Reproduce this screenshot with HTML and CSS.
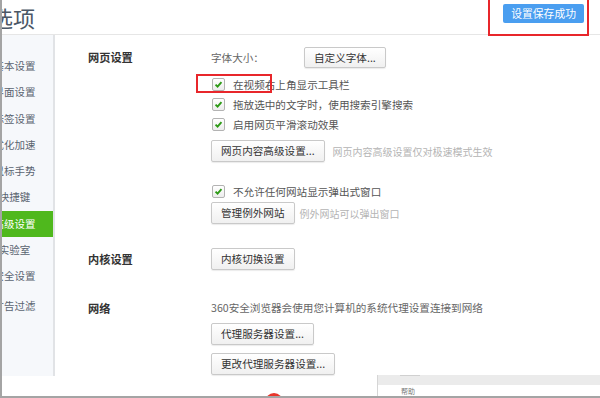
FILE: index.html
```html
<!DOCTYPE html>
<html lang="zh-CN">
<head>
    <meta charset="UTF-8">
    <meta name="viewport" content="width=device-width, initial-scale=1.0">
    <title>选项</title>
    <link rel="stylesheet" href="styles.css">
</head>
<body>

    <div class="frame">
        <div class="header">
            <h1 class="title">选项</h1>
            <button class="save-btn">设置保存成功</button>
        </div>

        <div class="layout">
            <div class="sidebar">
                <ul class="nav">
                    <li>基本设置</li>
                    <li>界面设置</li>
                    <li>标签设置</li>
                    <li>优化加速</li>
                    <li>鼠标手势</li>
                    <li>快捷键</li>
                    <li class="active">高级设置</li>
                    <li>实验室</li>
                    <li>安全设置</li>
                    <li class="last">广告过滤</li>
                </ul>
            </div>

            <div class="main">
                <div class="section">
                    <div class="sec-label">网页设置</div>
                    <div class="sec-body">
                        <div class="row font-row">
                            <span class="field-label">字体大小：</span>
                            <button class="btn">自定义字体...</button>
                        </div>
                        <label class="check-row first-check">
                            <span class="checkbox"><svg viewBox="0 0 13 13"><path d="M3 6.6 L5.4 9 L10 3.6" /></svg></span>
                            在视频右上角显示工具栏
                        </label>
                        <label class="check-row">
                            <span class="checkbox"><svg viewBox="0 0 13 13"><path d="M3 6.6 L5.4 9 L10 3.6" /></svg></span>
                            拖放选中的文字时，使用搜索引擎搜索
                        </label>
                        <label class="check-row">
                            <span class="checkbox"><svg viewBox="0 0 13 13"><path d="M3 6.6 L5.4 9 L10 3.6" /></svg></span>
                            启用网页平滑滚动效果
                        </label>
                        <div class="row btn-row">
                            <button class="btn">网页内容高级设置...</button>
                            <span class="hint">网页内容高级设置仅对极速模式生效</span>
                        </div>
                        <label class="check-row popup-check">
                            <span class="checkbox"><svg viewBox="0 0 13 13"><path d="M3 6.6 L5.4 9 L10 3.6" /></svg></span>
                            不允许任何网站显示弹出式窗口
                        </label>
                        <div class="row exc-row">
                            <button class="btn">管理例外网站</button>
                            <span class="hint hint-near">例外网站可以弹出窗口</span>
                        </div>
                    </div>
                </div>

                <div class="section kernel">
                    <div class="sec-label">内核设置</div>
                    <div class="sec-body">
                        <div class="row">
                            <button class="btn">内核切换设置</button>
                        </div>
                    </div>
                </div>

                <div class="section network">
                    <div class="sec-label label-short">网络</div>
                    <div class="sec-body">
                        <div class="net-text">360安全浏览器会使用您计算机的系统代理设置连接到网络</div>
                        <div class="row proxy-row">
                            <button class="btn">代理服务器设置...</button>
                        </div>
                        <div class="row change-row">
                            <button class="btn">更改代理服务器设置...</button>
                        </div>
                    </div>
                </div>
            </div>
        </div>

        <!-- annotation boxes and the window peeking in at the bottom -->
        <div class="mark mark-save"></div>
        <div class="mark mark-check"></div>
        <div class="red-dot"></div>
        <div class="help-window">
            <div class="help-bar"><span class="help-tab"></span></div>
            <div class="help-text">帮助</div>
        </div>
    </div>

</body>
</html>
```

FILE: styles.css
```css
body {
    margin: 0;
    padding: 0;
    background-color: #fff;
    font-family: "Noto Sans CJK SC", "Noto Sans", sans-serif;
    color: #555;
}

.frame {
    position: relative;
    width: 600px;
    height: 398px;
    box-sizing: border-box;
    border-left: 2px solid #a4a4a4;
    border-bottom: 2px solid #a4a4a4;
    overflow: hidden;
}

.header {
    height: 34px;
    border-bottom: 1px solid #e6e6e6;
    display: flex;
    justify-content: space-between;
}

.title {
    margin: 0 0 0 -11px;
    font-size: 22px;
    font-weight: normal;
    line-height: 34px;
    color: #4b5766;
}

.save-btn {
    margin: 4px 16px 0 0;
    height: 19px;
    padding: 0 8px;
    border: none;
    border-radius: 2px;
    background-color: #4a9ef0;
    color: #fff;
    font-family: inherit;
    font-size: 10.8px;
    line-height: 19px;
}

.layout {
    display: flex;
    height: 361px;
}

.sidebar {
    width: 51px;
    height: 341px;
    background-color: #f6f8fb;
    border-right: 2px solid #e1e3e6;
    overflow: hidden;
    flex-shrink: 0;
}

.nav {
    list-style: none;
    margin: 0 0 0 -26px;
    padding: 18px 0 0 0;
    width: 77px;
}

.nav li {
    height: 26.3px;
    line-height: 26.3px;
    text-align: center;
    font-size: 10.5px;
    color: #5a6470;
}

.nav li.active {
    background-color: #4fb81d;
    color: #fff;
}

.nav li.last {
    margin-top: 3px;
}

.main {
    flex: 1;
    padding: 11px 0 0 33px;
    font-size: 10.6px;
}

.section {
    display: flex;
}

.sec-label {
    width: 123px;
    flex-shrink: 0;
    line-height: 22px;
    font-size: 11.2px;
    font-weight: bold;
    color: #333;
}

.sec-body {
    display: flex;
    flex-direction: column;
    align-items: flex-start;
}

.row {
    display: flex;
    align-items: center;
    height: 22px;
}

.field-label {
    width: 93px;
    color: #666;
}

.btn {
    height: 22px;
    padding: 0 9px;
    border: 1px solid #c9c9c9;
    border-radius: 2px;
    background: linear-gradient(#ffffff, #f0f0f0);
    box-shadow: 0 1px 1px rgba(0, 0, 0, 0.08);
    font-family: inherit;
    font-size: 10.6px;
    color: #333;
    line-height: 20px;
    white-space: nowrap;
}

.font-row .btn {
    height: 21px;
}

.check-row {
    display: flex;
    align-items: center;
    height: 20px;
    color: #555;
    margin-left: 1px;
}

.first-check {
    margin-top: 6px;
}

.checkbox {
    width: 13px;
    height: 13px;
    box-sizing: border-box;
    border: 1px solid #b3b3b3;
    border-radius: 2px;
    background: linear-gradient(#ffffff, #ededed);
    margin-right: 8px;
    display: flex;
}

.checkbox svg {
    width: 11px;
    height: 11px;
}

.checkbox path {
    fill: none;
    stroke: #2d9a16;
    stroke-width: 2.2;
}

.btn-row {
    margin-top: 6px;
}

.hint {
    margin-left: 8px;
    font-size: 10px;
    color: #b4b4b4;
}

.hint-near {
    margin-left: 5px;
}

.popup-check {
    margin-top: 19px;
}

.exc-row {
    margin-top: 1px;
}

.kernel {
    margin-top: 24px;
}

.network {
    margin-top: 28px;
}

.label-short {
    line-height: 20px;
}

.net-text {
    height: 20px;
    line-height: 20px;
    color: #666;
}

.proxy-row {
    margin-top: 5px;
}

.change-row {
    margin-top: 8px;
}

.mark {
    position: absolute;
    border: 2px solid #e8262b;
    box-sizing: border-box;
}

.mark-save {
    left: 486px;
    top: -3px;
    width: 101px;
    height: 39px;
}

.mark-check {
    left: 194px;
    top: 74px;
    width: 76px;
    height: 19px;
}

.red-dot {
    position: absolute;
    left: 263px;
    top: 393px;
    width: 18px;
    height: 18px;
    border-radius: 50%;
    background-color: #e8352b;
}

.help-window {
    position: absolute;
    left: 375px;
    top: 375px;
    right: 0;
    bottom: 0;
    background-color: #fff;
    border-left: 1px solid #d6d6d6;
}

.help-bar {
    height: 10px;
    background-color: #ebebeb;
}

.help-tab {
    display: block;
    margin-left: 22px;
    width: 20px;
    height: 1px;
    background-color: #d0d0d0;
}

.help-text {
    margin: 2px 0 0 23px;
    font-size: 7px;
    line-height: 9px;
    color: #777;
}
```
